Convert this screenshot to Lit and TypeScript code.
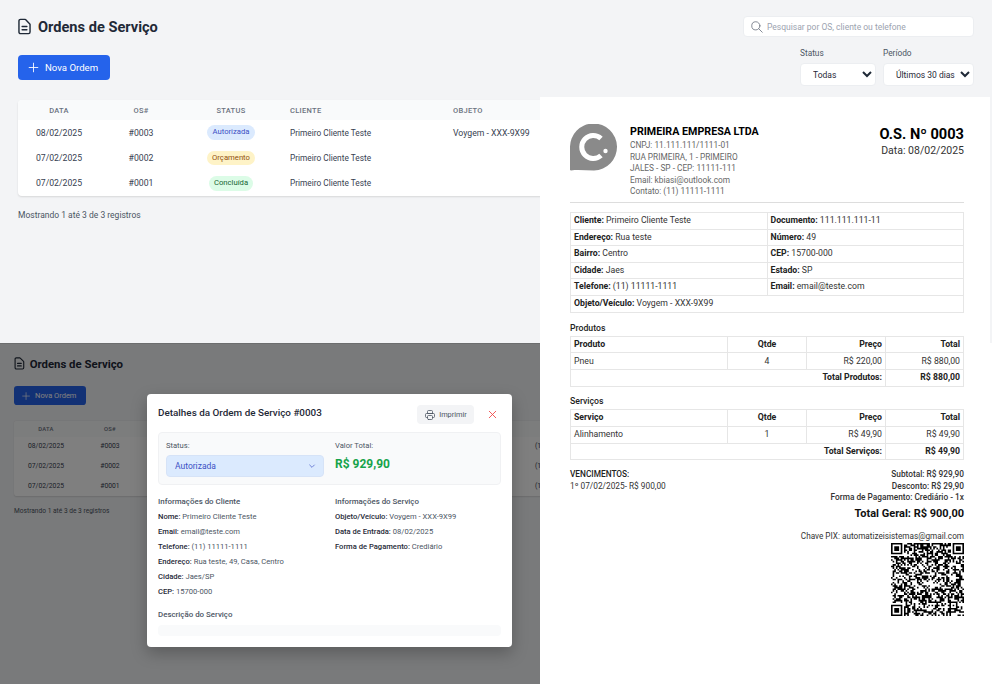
import { LitElement, html, css, svg } from 'lit';
import { customElement } from 'lit/decorators.js';

const UI_FONT = css`Roboto, 'Open Sans', sans-serif`;

const icon = (d: string, size: number, sw = 2) => html`<svg width=${size} height=${size} viewBox="0 0 24 24" fill="none" stroke="currentColor" stroke-width=${sw} stroke-linecap="round" stroke-linejoin="round"><path d=${d}></path></svg>`;

const ICONS = {
  doc: 'M9 12h6m-6 4h6m2 5H7a2 2 0 01-2-2V5a2 2 0 012-2h5.586a1 1 0 01.707.293l5.414 5.414a1 1 0 01.293.707V19a2 2 0 01-2 2z',
  plus: 'M12 4v16m8-8H4',
  search: 'M21 21l-6-6m2-5a7 7 0 11-14 0 7 7 0 0114 0z',
  printer: 'M17 17h2a2 2 0 002-2v-4a2 2 0 00-2-2H5a2 2 0 00-2 2v4a2 2 0 002 2h2m2 4h6a2 2 0 002-2v-4a2 2 0 00-2-2H9a2 2 0 00-2 2v4a2 2 0 002 2zm8-12V5a2 2 0 00-2-2H9a2 2 0 00-2 2v4h10z',
  close: 'M6 18L18 6M6 6l12 12',
  chevron: 'M19 9l-7 7-7-7',
};

const ORDERS = [
  { date: '08/02/2025', os: '#0003', status: 'Autorizada', cls: 'blue', client: 'Primeiro Cliente Teste', obj: 'Voygem - XXX-9X99' },
  { date: '07/02/2025', os: '#0002', status: 'Orçamento', cls: 'yellow', client: 'Primeiro Cliente Teste', obj: '' },
  { date: '07/02/2025', os: '#0001', status: 'Concluída', cls: 'green', client: 'Primeiro Cliente Teste', obj: '' },
];

@customElement('os-list')
export class OsList extends LitElement {
  static styles = css`
    :host {
      display: block;
      width: 992px;
      height: 343px;
      box-sizing: border-box;
      padding: 16px 18px 0;
      background: #f3f4f6;
      font-family: ${UI_FONT};
      color: #1f2937;
    }
    .head, .actions {
      display: flex;
      justify-content: space-between;
    }
    .head { align-items: center; height: 21px; }
    h1 {
      display: flex;
      align-items: center;
      gap: 4px;
      margin: 0;
      font-size: 14.6px;
      font-weight: 700;
      color: #1f2937;
    }
    h1 svg { margin-left: -3px; }
    .search {
      display: flex;
      align-items: center;
      gap: 3px;
      width: 231px;
      height: 21px;
      box-sizing: border-box;
      padding: 0 6px;
      background: #fff;
      border: 1px solid #eceef1;
      border-radius: 4px;
      color: #6b7280;
    }
    .search input {
      flex: 1;
      border: 0;
      outline: 0;
      padding: 0;
      font: 8.5px ${UI_FONT};
      background: transparent;
    }
    .search input::placeholder { color: #9ca3af; }
    .actions { align-items: flex-start; margin-top: 11px; height: 52px; }
    .new {
      display: flex;
      align-items: center;
      gap: 5px;
      margin-top: 7px;
      width: 92px;
      height: 25px;
      box-sizing: border-box;
      padding: 0 0 0 9px;
      border: 0;
      border-radius: 4px;
      background: #2563eb;
      color: #fff;
      font: 9.6px ${UI_FONT};
    }
    .filters { display: flex; gap: 7px; }
    .filters label {
      display: flex;
      flex-direction: column;
      gap: 4px;
      font-size: 8.3px;
      line-height: 11px;
      color: #4b5563;
    }
    .filters select {
      height: 23px;
      padding: 0 0 0 8px;
      background: #fff;
      border: 1px solid #eceef1;
      border-radius: 4px;
      color: #1f2937;
      font: 8.5px ${UI_FONT};
    }
    .table {
      width: 956px;
      background: #fff;
      border-radius: 4px;
      box-shadow: 0 1px 2px rgba(0, 0, 0, .12);
      overflow: hidden;
    }
    table { width: 100%; border-collapse: collapse; table-layout: fixed; }
    th {
      height: 20px;
      padding: 0;
      background: #f9fafb;
      font-size: 7.5px;
      font-weight: 500;
      letter-spacing: .3px;
      color: #6b7280;
    }
    td { height: 25.4px; padding: 0; font-size: 8.7px; color: #374151; text-align: center; }
    .left { text-align: left; padding-left: 10px; }
    td.client { font-size: 8.3px; }
    .badge {
      display: inline-block;
      padding: 0 5px;
      line-height: 14.5px;
      border-radius: 8px;
      font-size: 7.7px;
    }
    .blue { background: #dbeafe; color: #3b50c4; }
    .yellow { background: #fef3c7; color: #92500e; }
    .green { background: #dcfce7; color: #166534; }
    .count { margin: 14px 0 0; font-size: 8.5px; color: #4b5563; }
  `;

  render() {
    return html`
      <div class="head">
        <h1>${icon(ICONS.doc, 19, 1.8)}Ordens de Serviço</h1>
        <div class="search">${icon(ICONS.search, 14, 1.4)}<input placeholder="Pesquisar por OS, cliente ou telefone" /></div>
      </div>
      <div class="actions">
        <button class="new">${icon(ICONS.plus, 13, 1.6)}Nova Ordem</button>
        <div class="filters">
          <label>Status<select style="width:76px"><option>Todas</option></select></label>
          <label>Período<select style="width:91px"><option>Últimos 30 dias</option></select></label>
        </div>
      </div>
      <div class="table">
        <table>
          <colgroup><col style="width:82px" /><col style="width:82px" /><col style="width:98px" /><col style="width:163px" /><col style="width:233px" /><col /></colgroup>
          <tr><th>DATA</th><th>OS#</th><th>STATUS</th><th class="left">CLIENTE</th><th class="left">OBJETO</th><th></th></tr>
          ${ORDERS.map((o) => html`
            <tr>
              <td>${o.date}</td>
              <td>${o.os}</td>
              <td><span class="badge ${o.cls}">${o.status}</span></td>
              <td class="left client">${o.client}</td>
              <td class="left">${o.obj}</td>
              <td class="left">(11) 11111-1111</td>
            </tr>`)}
        </table>
      </div>
      <p class="count">Mostrando 1 até 3 de 3 registros</p>
    `;
  }
}

// modulos do QR: padrao fixo nos cantos, resto pseudo aleatorio
function qrPath() {
  const n = 45;
  let seed = 20250208;
  const rnd = () => {
    seed = (seed * 1664525 + 1013904223) >>> 0;
    return seed / 4294967296;
  };
  const finder = (x: number, y: number, size: number) => {
    if (x < 0 || y < 0 || x >= size || y >= size) return false;
    const ring = x === 0 || y === 0 || x === size - 1 || y === size - 1;
    const core = x >= 2 && y >= 2 && x <= size - 3 && y <= size - 3;
    return ring || core;
  };
  let d = '';
  for (let y = 0; y < n; y++) {
    for (let x = 0; x < n; x++) {
      let on: boolean;
      const inTL = x < 8 && y < 8;
      const inTR = x >= n - 8 && y < 8;
      const inBL = x < 8 && y >= n - 8;
      const inAL = x >= 36 && x < 41 && y >= 36 && y < 41;
      if (inTL) on = finder(x, y, 7);
      else if (inTR) on = finder(x - (n - 7), y, 7);
      else if (inBL) on = finder(x, y - (n - 7), 7);
      else if (inAL) on = finder(x - 36, y - 36, 5);
      else on = rnd() > 0.5;
      if (on) d += `M${x} ${y}h1v1h-1z`;
    }
  }
  return d;
}

@customElement('os-print')
export class OsPrint extends LitElement {
  static styles = css`
    :host {
      display: block;
      box-sizing: border-box;
      height: 100%;
      padding: 27px 26px 0 30px;
      background: #fff;
      font-family: ${UI_FONT};
      font-size: 8.7px;
      line-height: 11.5px;
      color: #333;
    }
    .top {
      display: flex;
      height: 78px;
      border-bottom: 1px solid #ddd;
    }
    .logo { width: 48px; height: 47px; margin-right: 12px; flex: none; }
    .company { flex: 1; color: #666; font-size: 8.3px; }
    .company b {
      display: block;
      margin: 1px 0 1px;
      font-size: 10.7px;
      font-weight: 700;
      line-height: 14px;
      color: #000;
    }
    .number { text-align: right; }
    .number b { display: block; font-size: 14.6px; font-weight: 700; line-height: 20px; color: #000; }
    .number span { font-size: 10.5px; line-height: 14px; color: #333; }
    table { width: 100%; border-collapse: collapse; table-layout: fixed; }
    td, th {
      height: 15.6px;
      padding: 0 3px;
      border: 1px solid #e6e6e6;
      text-align: left;
      font-size: 8.7px;
      font-weight: 400;
    }
    b, th, .strong { font-weight: 700; color: #222; }
    .info { margin-top: 9px; }
    .title { margin: 9px 0 2px; line-height: 11px; color: #222; font-weight: 500; }
    .info + .title { margin-top: 10px; }
    .c { text-align: center; }
    .r { text-align: right; }
    .items td, .items th { height: 15.8px; }
    .bottom { display: flex; justify-content: space-between; margin-top: 9px; font-size: 8.3px; }
    .totals { text-align: right; font-weight: 500; color: #333; }
    .grand { margin: 2px 0 0; font-size: 11px; line-height: 16px; font-weight: 700; color: #111; }
    .pix { margin-top: 9px; font-weight: 400; font-size: 8.2px; }
    .qr { display: block; margin: 1px 0 0 auto; width: 73px; height: 73px; }
    .due b { display: block; font-weight: 500; }
  `;

  private itemsTable(head: string, name: string, qty: string, price: string, total: string, footLabel: string) {
    return html`
      <table class="items">
        <colgroup><col style="width:157px" /><col style="width:79px" /><col style="width:79px" /><col /></colgroup>
        <tr><th>${head}</th><th class="c">Qtde</th><th class="r">Preço</th><th class="r">Total</th></tr>
        <tr><td>${name}</td><td class="c">${qty}</td><td class="r">${price}</td><td class="r">${total}</td></tr>
        <tr><td colspan="3" class="r strong">${footLabel}</td><td class="r strong">${total}</td></tr>
      </table>
    `;
  }

  render() {
    return html`
      <div class="top">
        <svg class="logo" viewBox="0 0 48 47">
          <path fill="#8a8a8a" d="M0 46V23.5A23.5 23.5 0 1 1 24 46.5C16 46.5 8 45.5 1 46.5z"></path>
          <path fill="none" stroke="#fff" stroke-width="5" d="M31 14.5A11.5 11.5 0 1 0 31 31.5"></path>
          <circle cx="35.5" cy="27" r="2.2" fill="#fff"></circle>
        </svg>
        <div class="company">
          <b>PRIMEIRA EMPRESA LTDA</b>
          CNPJ: 11.111.111/1111-01<br />
          RUA PRIMEIRA, 1 - PRIMEIRO<br />
          JALES - SP - CEP: 11111-111<br />
          Email: kbiasi@outlook.com<br />
          Contato: (11) 11111-1111
        </div>
        <div class="number">
          <b>O.S. Nº 0003</b>
          <span>Data: 08/02/2025</span>
        </div>
      </div>
      <table class="info">
        <tr><td><b>Cliente:</b> Primeiro Cliente Teste</td><td><b>Documento:</b> 111.111.111-11</td></tr>
        <tr><td><b>Endereço:</b> Rua teste</td><td><b>Número:</b> 49</td></tr>
        <tr><td><b>Bairro:</b> Centro</td><td><b>CEP:</b> 15700-000</td></tr>
        <tr><td><b>Cidade:</b> Jaes</td><td><b>Estado:</b> SP</td></tr>
        <tr><td><b>Telefone:</b> (11) 11111-1111</td><td><b>Email:</b> email@teste.com</td></tr>
        <tr><td colspan="2"><b>Objeto/Veículo:</b> Voygem - XXX-9X99</td></tr>
      </table>
      <div class="title">Produtos</div>
      ${this.itemsTable('Produto', 'Pneu', '4', 'R$ 220,00', 'R$ 880,00', 'Total Produtos:')}
      <div class="title">Serviços</div>
      ${this.itemsTable('Serviço', 'Alinhamento', '1', 'R$ 49,90', 'R$ 49,90', 'Total Serviços:')}
      <div class="bottom">
        <div class="due"><b>VENCIMENTOS:</b>1º 07/02/2025- R$ 900,00</div>
        <div class="totals">
          Subtotal: R$ 929,90<br />
          Desconto: R$ 29,90<br />
          Forma de Pagamento: Crediário - 1x
          <div class="grand">Total Geral: R$ 900,00</div>
          <div class="pix">Chave PIX: automatizeisistemas@gmail.com</div>
          <svg class="qr" viewBox="0 0 45 45">${svg`<path d=${qrPath()} fill="#000"></path>`}</svg>
        </div>
      </div>
    `;
  }
}

@customElement('os-modal')
export class OsModal extends LitElement {
  static styles = css`
    :host {
      display: block;
      box-sizing: border-box;
      width: 365px;
      height: 253px;
      padding: 11px;
      background: #fff;
      border-radius: 4px;
      box-shadow: 0 6px 16px rgba(0, 0, 0, .25);
      font-family: ${UI_FONT};
      font-size: 7.6px;
      color: #4b5563;
      overflow: hidden;
    }
    .head { display: flex; align-items: flex-start; height: 27px; }
    h2 {
      flex: 1;
      margin: 1px 0 0;
      font-size: 9.9px;
      line-height: 14px;
      font-weight: 500;
      color: #1f2937;
    }
    .print {
      display: flex;
      align-items: center;
      justify-content: center;
      gap: 3px;
      width: 57px;
      height: 19px;
      padding: 0;
      border: 0;
      border-radius: 4px;
      background: #f3f4f6;
      color: #4b5563;
      font: 7.4px ${UI_FONT};
    }
    .close {
      display: flex;
      margin: 3px 2.5px 0 11.5px;
      padding: 0;
      border: 0;
      background: none;
      color: #ef4444;
    }
    .panel {
      display: grid;
      grid-template-columns: 169px 1fr;
      height: 53px;
      box-sizing: border-box;
      padding: 7px 7px;
      background: #f9fafb;
      border: 1px solid #f0f1f3;
      border-radius: 4px;
    }
    .panel label, .panel .label { display: block; line-height: 11px; }
    .sel { position: relative; width: 158px; margin-top: 4px; }
    .sel select {
      appearance: none;
      width: 100%;
      height: 22px;
      padding: 0 8px;
      border: 1px solid #d6e3f7;
      border-radius: 4px;
      background: #dbeafe;
      color: #3b50c4;
      font: 8.5px ${UI_FONT};
    }
    .sel svg { position: absolute; right: 8px; top: 7px; color: #3b50c4; }
    .value { margin-top: 4px; font-size: 12px; line-height: 18px; font-weight: 700; color: #16a34a; }
    .cols { display: grid; grid-template-columns: 177px 1fr; margin-top: 11px; }
    h3 { margin: 0 0 1px; font-size: 7.9px; line-height: 12px; font-weight: 500; color: #4b5563; }
    p { margin: 0; line-height: 15px; white-space: nowrap; }
    b { font-weight: 500; color: #1f2937; }
    .desc { margin-top: 10px; }
    .desc h3 { margin-bottom: 4px; }
    .box { height: 11px; background: #f9fafb; border-radius: 4px; }
  `;

  render() {
    return html`
      <div class="head">
        <h2>Detalhes da Ordem de Serviço #0003</h2>
        <button class="print">${icon(ICONS.printer, 12, 1.6)}Imprimir</button>
        <button class="close">${icon(ICONS.close, 13, 1.6)}</button>
      </div>
      <div class="panel">
        <div>
          <label>Status:</label>
          <div class="sel"><select><option>Autorizada</option></select>${icon(ICONS.chevron, 8, 2)}</div>
        </div>
        <div>
          <div class="label">Valor Total:</div>
          <div class="value">R$ 929,90</div>
        </div>
      </div>
      <div class="cols">
        <div>
          <h3>Informações do Cliente</h3>
          <p><b>Nome:</b> Primeiro Cliente Teste</p>
          <p><b>Email:</b> email@teste.com</p>
          <p><b>Telefone:</b> (11) 11111-1111</p>
          <p><b>Endereço:</b> Rua teste, 49, Casa, Centro</p>
          <p><b>Cidade:</b> Jaes/SP</p>
          <p><b>CEP:</b> 15700-000</p>
        </div>
        <div>
          <h3>Informações do Serviço</h3>
          <p><b>Objeto/Veículo:</b> Voygem - XXX-9X99</p>
          <p><b>Data de Entrada:</b> 08/02/2025</p>
          <p><b>Forma de Pagamento:</b> Crediário</p>
        </div>
      </div>
      <div class="desc">
        <h3>Descrição do Serviço</h3>
        <div class="box"></div>
      </div>
    `;
  }
}

@customElement('app-root')
export class AppRoot extends LitElement {
  static styles = css`
    :host {
      display: block;
      position: relative;
      width: 992px;
      height: 684px;
      background: #fff;
      overflow: hidden;
    }
    .lower {
      position: relative;
      width: 540px;
      height: 341px;
      overflow: hidden;
      background: #f3f4f6;
    }
    .lower os-list { zoom: .78; height: 440px; }
    .dim {
      position: absolute;
      inset: 0;
      background: rgba(0, 0, 0, .5);
      border-top: 1px solid rgba(0, 0, 0, .1);
    }
    .dim os-modal { position: absolute; left: 147px; top: 50px; }
    .sheet {
      position: absolute;
      left: 540px;
      top: 97px;
      width: 450px;
      height: 587px;
    }
  `;

  render() {
    return html`
      <os-list></os-list>
      <div class="lower">
        <os-list></os-list>
        <div class="dim"><os-modal></os-modal></div>
      </div>
      <div class="sheet"><os-print></os-print></div>
    `;
  }
}
